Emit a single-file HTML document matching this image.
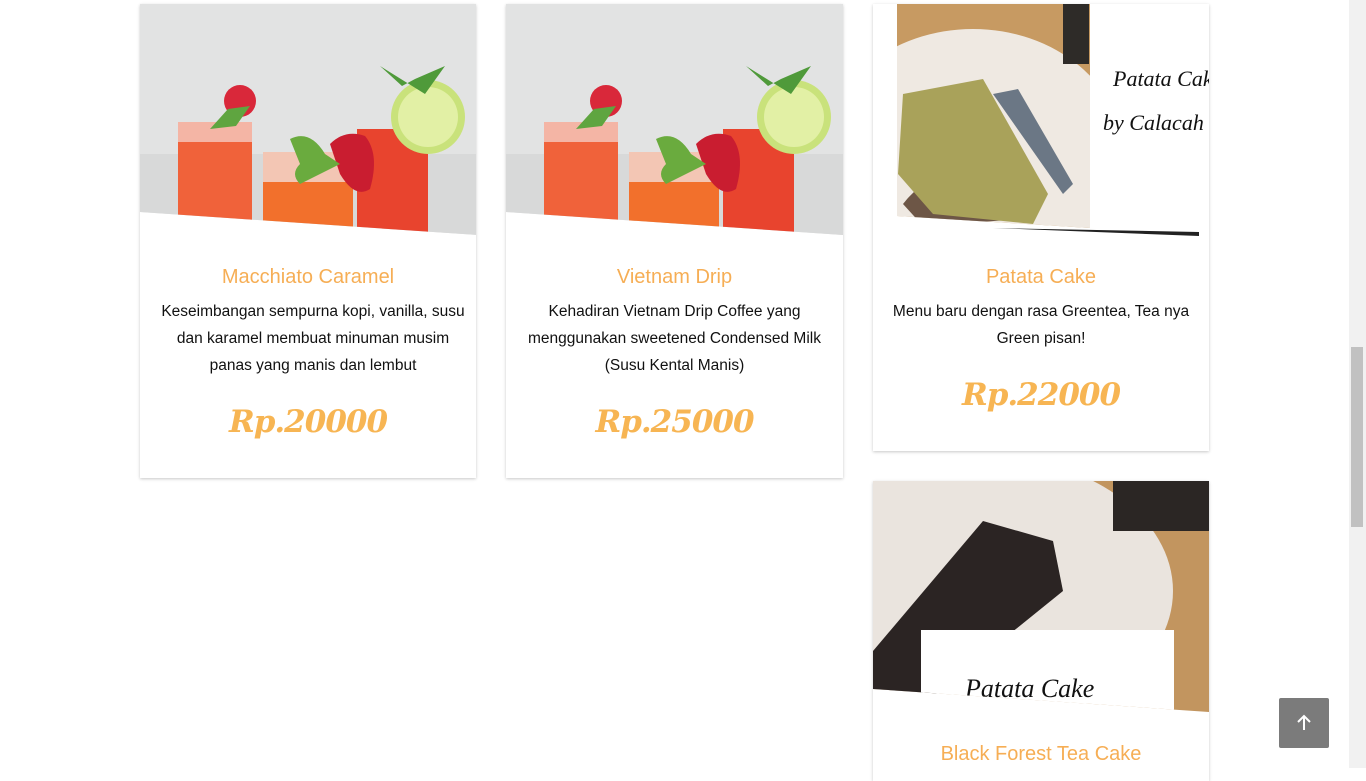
<!DOCTYPE html>
<html><head><meta charset="utf-8">
<style>
body{margin:0;width:1366px;height:768px;overflow:hidden;background:#fff;font-family:"Liberation Sans",sans-serif;position:relative}
.card{position:absolute;background:#fff;box-shadow:0 1px 3px rgba(0,0,0,.22);overflow:hidden;text-align:center}
.img{position:absolute;left:0;top:0}
h3{position:absolute;left:0;right:0;margin:0;font-weight:normal;font-size:20px;color:#f6ae55}
p{position:absolute;left:20px;right:10px;margin:0;font-size:15.5px;line-height:27px;color:#111}
.price{position:absolute;left:0;right:0;font-family:"DejaVu Serif",serif;font-style:italic;font-weight:bold;font-size:31px;color:#f7b553;letter-spacing:-1px}
.sb{position:absolute;right:0;top:0;width:17px;height:768px;background:#f1f1f1}
.thumb{position:absolute;left:2px;top:347px;width:12px;height:180px;background:#c1c1c1}
.top{position:absolute;left:1279px;top:698px;width:50px;height:50px;background:#7b7b7b;border-radius:2px}
</style></head><body>
<svg width="0" height="0" style="position:absolute"><defs>
<g id="drink">
<rect width="337" height="240" fill="#e2e3e3"/>
<rect y="150" width="337" height="90" fill="#d8d9d9"/>
<rect x="38" y="118" width="74" height="102" fill="#f0623a"/>
<rect x="38" y="118" width="74" height="20" fill="#f4b5a5"/>
<circle cx="100" cy="97" r="16" fill="#d9283a"/>
<path d="M70 125 L88 105 L110 102 L96 122Z" fill="#5fa540"/>
<rect x="123" y="148" width="90" height="82" fill="#f2702c"/>
<rect x="123" y="148" width="90" height="30" fill="#f3c6b4"/>
<rect x="217" y="125" width="71" height="105" fill="#e8442e"/>
<circle cx="288" cy="113" r="37" fill="#c9e27b"/>
<circle cx="288" cy="113" r="30" fill="#e2f0a5"/>
<path d="M240 62 L262 82 L275 75 L305 62 L285 90Z" fill="#4f9a3a"/>
<path d="M190 140 Q205 125 225 132 Q240 150 230 185 Q215 195 200 170Z" fill="#c91d30"/>
<path d="M150 135 Q170 125 185 150 L200 160 L160 180 Q150 170 160 160Z" fill="#6aab3e"/>
</g></defs></svg>

<div class="card" style="left:140px;top:4px;width:336px;height:474px">
<svg class="img" width="337" height="240" style="clip-path:polygon(0 0,100% 0,100% 231px,0 208px)"><use href="#drink"/></svg>
<h3 style="top:262px">Macchiato Caramel</h3>
<p style="top:294px">Keseimbangan sempurna kopi, vanilla, susu dan karamel membuat minuman musim panas yang manis dan lembut</p>
<div class="price" style="top:400px">Rp.20000</div>
</div>

<div class="card" style="left:506px;top:4px;width:337px;height:474px">
<svg class="img" width="337" height="240" style="clip-path:polygon(0 0,100% 0,100% 231px,0 208px)"><use href="#drink"/></svg>
<h3 style="top:262px">Vietnam Drip</h3>
<p style="top:294px;left:14px;right:14px">Kehadiran Vietnam Drip Coffee yang menggunakan sweetened Condensed Milk (Susu Kental Manis)</p>
<div class="price" style="top:400px">Rp.25000</div>
</div>

<div class="card" style="left:873px;top:4px;width:336px;height:447px">
<svg class="img" width="336" height="235">
<defs><clipPath id="ph"><path d="M24 0 H217 V224 L24 212Z"/></clipPath></defs>
<g clip-path="url(#ph)">
<rect x="24" width="193" height="224" fill="#c79a62"/>
<ellipse cx="100" cy="150" rx="150" ry="125" fill="#efe9e2"/>
<path d="M30 200 Q60 160 110 180 L150 215 L50 222Z" fill="#6d5646"/>
<path d="M30 90 L110 75 L175 190 L160 220 L60 210 L25 170Z" fill="#a9a25a"/>
<path d="M120 90 L145 85 L200 180 L190 190Z" fill="#6b7785"/>
<rect x="190" width="26" height="60" fill="#2e2b28"/>
</g>
<path d="M120 224 L326 228 L326 232Z" fill="#222"/>
<text x="240" y="82" font-family="Liberation Serif,serif" font-style="italic" font-size="22" fill="#111">Patata Cake</text>
<text x="230" y="126" font-family="Liberation Serif,serif" font-style="italic" font-size="22" fill="#111">by Calacah Kop</text>
</svg>
<h3 style="top:262px">Patata Cake</h3>
<p style="top:294px;left:14px;right:14px">Menu baru dengan rasa Greentea, Tea nya Green pisan!</p>
<div class="price" style="top:373px">Rp.22000</div>
</div>

<div class="card" style="left:873px;top:481px;width:336px;height:300px">
<svg class="img" width="336" height="235" style="clip-path:polygon(0 0,100% 0,100% 231px,0 208px)">
<rect width="336" height="235" fill="#c2955f"/>
<ellipse cx="110" cy="110" rx="190" ry="135" fill="#eae4de"/>
<rect x="240" width="96" height="50" fill="#2b2624"/>
<path d="M0 170 L110 40 L180 60 L190 110 L60 215 L0 210Z" fill="#2b2423"/>
<rect x="48" y="149" width="253" height="90" fill="#fff"/>
<text x="92" y="216" font-family="Liberation Serif,serif" font-style="italic" font-size="26" fill="#111">Patata Cake</text>
</svg>
<h3 style="top:262px">Black Forest Tea Cake</h3>
</div>

<div class="top"><svg width="50" height="50"><path d="M25 32V18M19 24L25 18L31 24" stroke="#fff" stroke-width="2" fill="none"/></svg></div>
<div class="sb"><div class="thumb"></div></div>
</body></html>
